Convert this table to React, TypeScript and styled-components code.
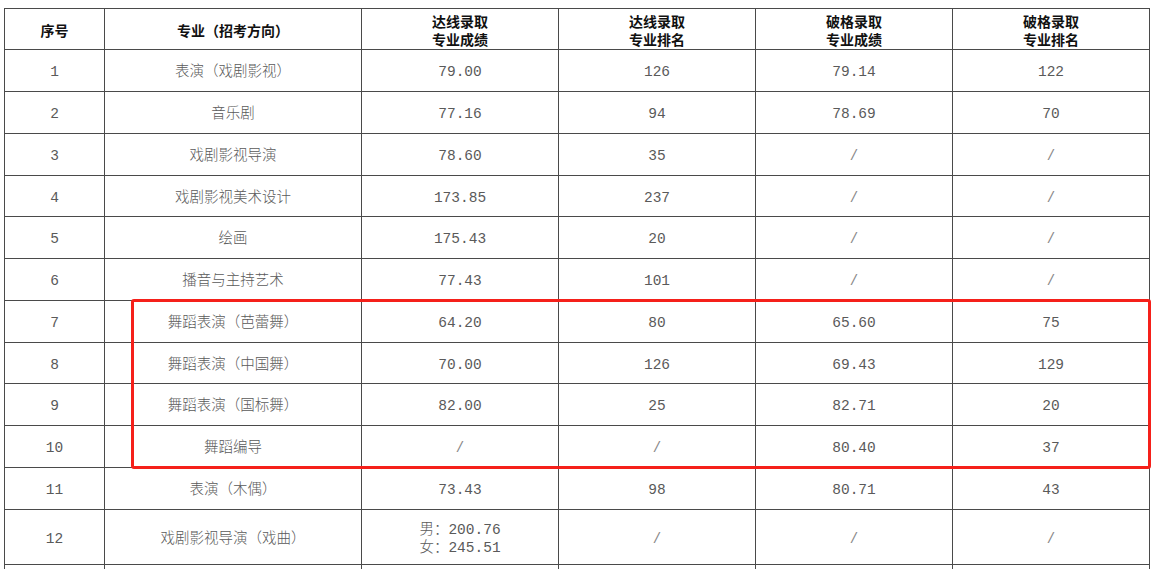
import React from "react";
import styled, { createGlobalStyle } from "styled-components";

const Global = createGlobalStyle`
  html, body { margin: 0; padding: 0; background: #fff; }
  body { font-family: "Noto Sans CJK SC", sans-serif; }
`;

const Page = styled.div`
  padding: 8px 0 0 4px;
  height: 569px;
  box-sizing: border-box;
  overflow: hidden;
`;

const Wrap = styled.div`
  position: relative;
  width: 1146px;
`;

const Grid = styled.div`
  display: grid;
  grid-template-columns: 99px 256px 196px 196px 196px 196px;
  grid-template-rows: 40px 41px 41px 41px 40px 41px 41px 41px 40px 41px 41px 41px 54px 30px;
  gap: 1px;
  padding: 1px;
  background: #4a4a4a;
  width: 1146px;
  box-sizing: border-box;
`;

const HeadCell = styled.div`
  background: #fff;
  display: flex;
  align-items: center;
  justify-content: center;
  text-align: center;
  box-sizing: border-box;
  padding-top: 2px;
  font-family: "Noto Sans CJK SC", sans-serif;
  font-weight: 700;
  font-size: 14px;
  line-height: 18px;
  color: #111;
`;

const Cell = styled.div`
  background: #fff;
  display: flex;
  align-items: center;
  justify-content: center;
  text-align: center;
  box-sizing: border-box;
  padding-top: 3px;
  font-family: "Liberation Mono", "Noto Sans CJK SC", monospace;
  font-weight: 300;
  font-size: 14.5px;
  line-height: 18px;
  color: #5a5a5a;
`;

const Slash = styled.span`
  color: #888;
  font-size: 14px;
`;

const Highlight = styled.div`
  position: absolute;
  left: 127px;
  top: 291px;
  width: 1020px;
  height: 170px;
  box-sizing: border-box;
  border: 3px solid #f5201a;
  border-radius: 3px;
  pointer-events: none;
`;

const headers: React.ReactNode[] = [
  "序号",
  "专业（招考方向）",
  <>达线录取<br />专业成绩</>,
  <>达线录取<br />专业排名</>,
  <>破格录取<br />专业成绩</>,
  <>破格录取<br />专业排名</>,
];

const rows: string[][] = [
  ["1", "表演（戏剧影视）", "79.00", "126", "79.14", "122"],
  ["2", "音乐剧", "77.16", "94", "78.69", "70"],
  ["3", "戏剧影视导演", "78.60", "35", "/", "/"],
  ["4", "戏剧影视美术设计", "173.85", "237", "/", "/"],
  ["5", "绘画", "175.43", "20", "/", "/"],
  ["6", "播音与主持艺术", "77.43", "101", "/", "/"],
  ["7", "舞蹈表演（芭蕾舞）", "64.20", "80", "65.60", "75"],
  ["8", "舞蹈表演（中国舞）", "70.00", "126", "69.43", "129"],
  ["9", "舞蹈表演（国标舞）", "82.00", "25", "82.71", "20"],
  ["10", "舞蹈编导", "/", "/", "80.40", "37"],
  ["11", "表演（木偶）", "73.43", "98", "80.71", "43"],
  ["12", "戏剧影视导演（戏曲）", "男：200.76\n女：245.51", "/", "/", "/"],
  ["", "", "", "", "", ""],
];

function renderValue(v: string) {
  if (v === "/") return <Slash>/</Slash>;
  if (v.includes("\n")) {
    const [a, b] = v.split("\n");
    return (
      <span>
        {a}
        <br />
        {b}
      </span>
    );
  }
  return v;
}

export default function App() {
  return (
    <>
      <Global />
      <Page>
        <Wrap>
          <Grid>
            {headers.map((h, i) => (
              <HeadCell key={`h${i}`}>{h}</HeadCell>
            ))}
            {rows.map((r, ri) =>
              r.map((v, ci) => <Cell key={`${ri}-${ci}`}>{renderValue(v)}</Cell>)
            )}
          </Grid>
          <Highlight />
        </Wrap>
      </Page>
    </>
  );
}
